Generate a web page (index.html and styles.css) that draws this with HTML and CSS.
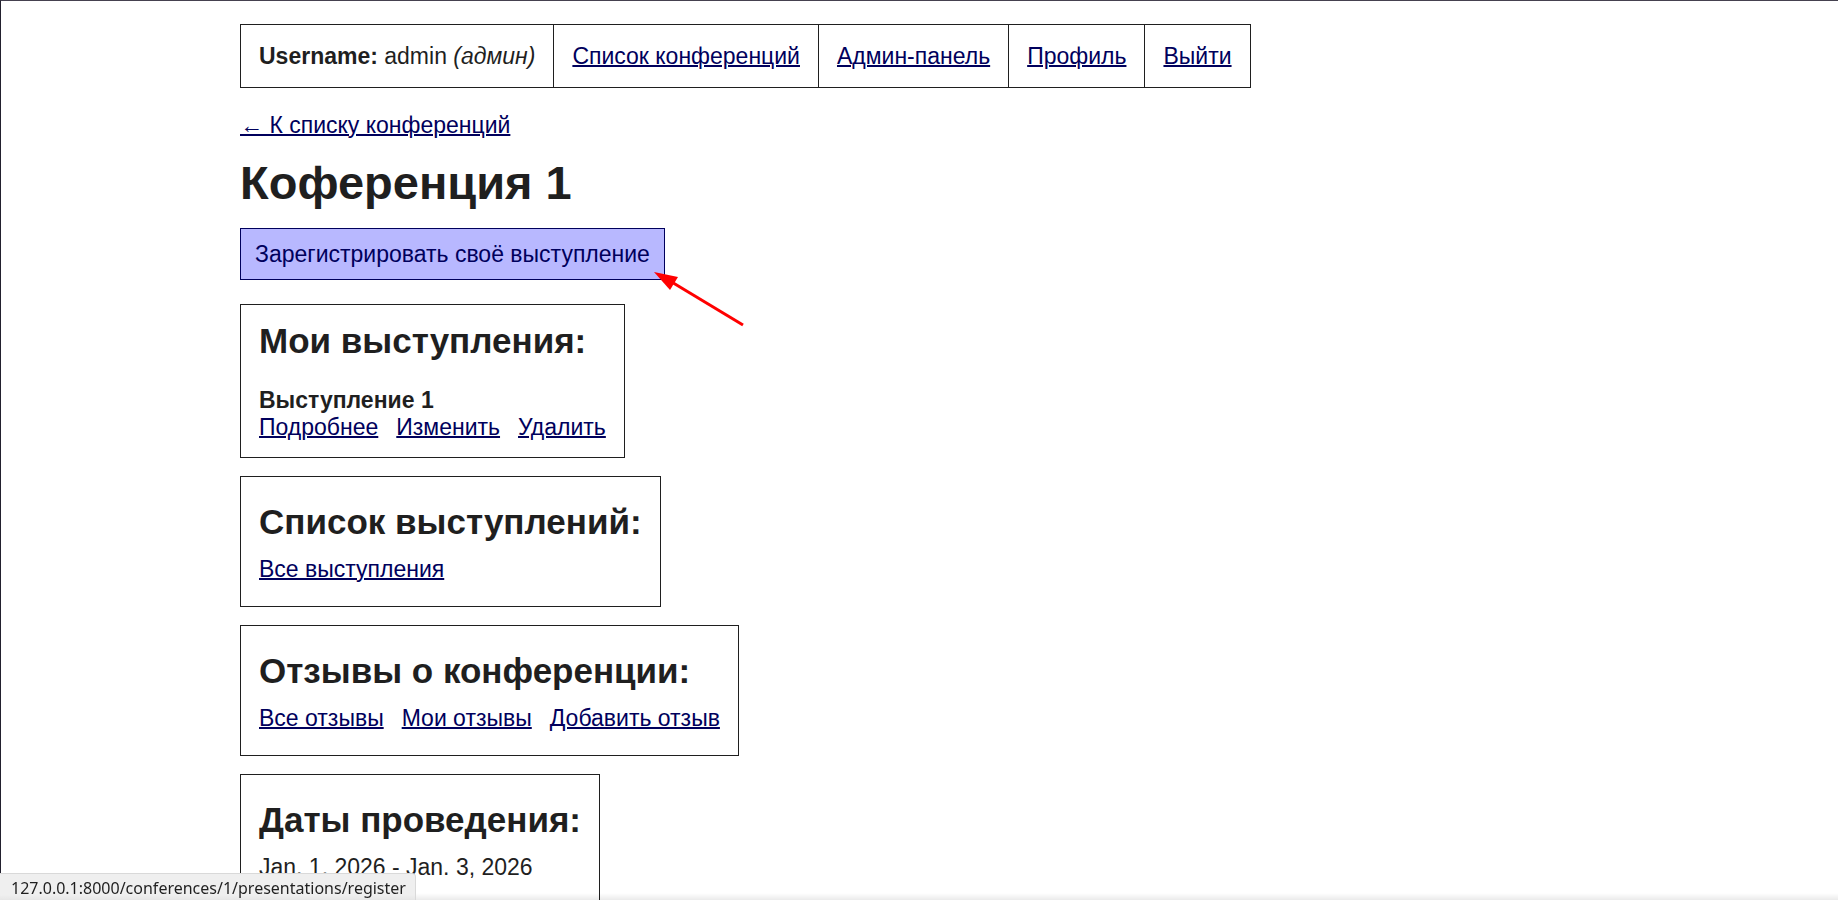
FILE: index.html
```html
<!DOCTYPE html>
<html lang="ru">
<head>
<meta charset="utf-8">
<title>Коференция 1</title>
<link rel="stylesheet" href="styles.css">
</head>
<body>
<div class="page">
  <nav class="nav">
    <span class="nav-item"><b>Username:</b> admin <i>(админ)</i></span>
    <span class="nav-item"><a href="#">Список конференций</a></span>
    <span class="nav-item"><a href="#">Админ-панель</a></span>
    <span class="nav-item"><a href="#">Профиль</a></span>
    <span class="nav-item"><a href="#">Выйти</a></span>
  </nav>
  <main class="content">
    <a class="back" href="#">← К списку конференций</a>
    <h1>Коференция 1</h1>
    <div class="register">
      <a class="button" href="#">Зарегистрировать своё выступление</a>
      <svg class="arrow" width="92" height="58" viewBox="0 0 92 58" aria-hidden="true">
        <path d="M16 10 L89 54" stroke="#ff0000" stroke-width="3" fill="none"/>
        <path d="M0 1 L24 6 L16 19 Z" fill="#ff0000"/>
      </svg>
    </div>
    <div class="cards">
      <section class="card card-mine">
        <h2>Мои выступления:</h2>
        <div class="talk">
          <b>Выступление 1</b>
          <div class="links"><a href="#">Подробнее</a><a href="#">Изменить</a><a href="#">Удалить</a></div>
        </div>
      </section>
      <section class="card">
        <h2>Список выступлений:</h2>
        <div class="links"><a href="#">Все выступления</a></div>
      </section>
      <section class="card">
        <h2>Отзывы о конференции:</h2>
        <div class="links"><a href="#">Все отзывы</a><a href="#">Мои отзывы</a><a href="#">Добавить отзыв</a></div>
      </section>
      <section class="card">
        <h2>Даты проведения:</h2>
        <div>Jan. 1, 2026 - Jan. 3, 2026</div>
      </section>
    </div>
  </main>
</div>
<div class="shade"></div>
<div class="status">127.0.0.1:8000/conferences/1/presentations/register</div>
</body>
</html>
```
FILE: styles.css
```css
* { box-sizing: border-box; }
body {
  margin: 0;
  height: 100vh;
  overflow: hidden;
  border-top: 1px solid #45414f;
  border-left: 1px solid #22202e;
  background: #fff;
  color: #1f1f1f;
  font: 23px/27px "Liberation Sans", Arial, sans-serif;
}
a {
  color: #00005c;
  text-decoration-thickness: 2px;
}
h1, h2 { margin: 0; font-weight: bold; }
h1 { margin: 20px 0 21px; font-size: 47px; line-height: 48px; }
h2 { font-size: 35px; line-height: 36px; }
.page { padding: 23px 239px 0; }
.nav { display: flex; width: fit-content; border: 1px solid #1f1f1f; }
.nav-item { padding: 18px 18px 17px; white-space: nowrap; }
.nav-item + .nav-item { border-left: 1px solid #1f1f1f; }
.content { margin-top: 24px; }
.back { display: block; width: fit-content; }
.register { position: relative; width: fit-content; margin-bottom: 24px; }
.button {
  display: block;
  padding: 12px 14px 11px;
  border: 1px solid #00005c;
  background: #b8b8ff;
  text-decoration: none;
}
.arrow { position: absolute; top: 43px; left: 414px; }
.cards { display: flex; flex-direction: column; align-items: flex-start; gap: 18px; }
.card {
  display: flex;
  flex-direction: column;
  gap: 16px;
  padding: 27px 18px 23px;
  border: 1px solid #1f1f1f;
}
.card-mine { gap: 28px; padding: 18px 18px 16px; }
.links { display: flex; gap: 18px; }
.shade {
  position: fixed;
  inset: auto 0 0 0;
  height: 7px;
  background: linear-gradient(rgba(0, 0, 0, 0), rgba(0, 0, 0, 0.08));
}
.status {
  position: fixed;
  left: 0;
  bottom: 0;
  padding: 3px 9px 1px 11px;
  border-top: 1px solid #d9d9d9;
  border-right: 1px solid #d9d9d9;
  border-top-right-radius: 4px;
  background: linear-gradient(#efefef 21px, #e6e6e6);
  font: 16px/22px "Noto Sans", sans-serif;
}
```
